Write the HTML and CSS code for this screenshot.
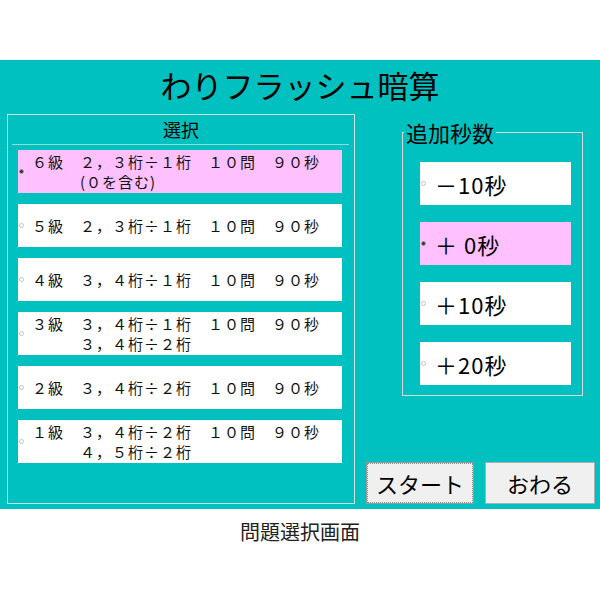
FILE: index.html
```html
<!DOCTYPE html>
<html lang="ja">
<head>
<meta charset="utf-8">
<title>わりフラッシュ暗算</title>
<link rel="stylesheet" href="styles.css">
</head>
<body>
<div class="stage">
  <h1 class="title">わりフラッシュ暗算</h1>
  <section class="levels">
    <div class="levels-head">選択</div>
    <div class="levels-sep"></div>
    <ul class="level-list">
      <li class="opt level sel"><span class="radio"></span><span class="txt">６級　２，３桁÷１桁　１０問　９０秒<br>　　　(０を含む)</span></li>
      <li class="opt level"><span class="radio"></span><span class="txt">５級　２，３桁÷１桁　１０問　９０秒</span></li>
      <li class="opt level"><span class="radio"></span><span class="txt">４級　３，４桁÷１桁　１０問　９０秒</span></li>
      <li class="opt level"><span class="radio"></span><span class="txt">３級　３，４桁÷１桁　１０問　９０秒<br>　　　３，４桁÷２桁</span></li>
      <li class="opt level"><span class="radio"></span><span class="txt">２級　３，４桁÷２桁　１０問　９０秒</span></li>
      <li class="opt level"><span class="radio"></span><span class="txt">１級　３，４桁÷２桁　１０問　９０秒<br>　　　４，５桁÷２桁</span></li>
    </ul>
  </section>
  <fieldset class="extra">
    <legend class="extra-legend">追加秒数</legend>
    <div class="extra-list">
      <div class="opt big"><span class="radio"></span><span class="txt">－10秒</span></div>
      <div class="opt big sel"><span class="radio"></span><span class="txt">＋ 0秒</span></div>
      <div class="opt big"><span class="radio"></span><span class="txt">＋10秒</span></div>
      <div class="opt big"><span class="radio"></span><span class="txt">＋20秒</span></div>
    </div>
  </fieldset>
  <div class="actions">
    <button class="btn start" type="button">スタート</button>
    <button class="btn quit" type="button">おわる</button>
  </div>
</div>
<p class="caption">問題選択画面</p>
</body>
</html>
```
FILE: styles.css
```css
* { box-sizing: border-box; }

body {
  margin: 0;
  width: 600px;
  height: 600px;
  background: #ffffff;
  font-family: "Noto Sans CJK JP", "Noto Sans", sans-serif;
  color: #000;
}

.stage {
  margin-top: 60px;
  height: 449px;
  background: #00c0c0;
  display: grid;
  grid-template-columns: 7px 348px 47px 181px 17px;
  grid-template-rows: 54px 5px 277px 66px 6px 36px 5px;
}

.title {
  grid-column: 1 / -1;
  grid-row: 1;
  margin: 0;
  font-size: 31px;
  font-weight: normal;
  text-align: center;
  line-height: 50px;
}

.levels {
  grid-column: 2;
  grid-row: 2 / 7;
  border: 1px solid #cfe2e2;
  display: flex;
  flex-direction: column;
}

.levels-head {
  height: 29px;
  line-height: 29px;
  text-align: center;
  font-size: 18px;
}

.levels-sep {
  height: 1px;
  background: #8edcdc;
  margin: 0 5px 0 4px;
}

.level-list {
  list-style: none;
  margin: 5px 12px 0 10px;
  padding: 0;
  display: flex;
  flex-direction: column;
  gap: 11px;
}

.opt {
  height: 43px;
  background: #ffffff;
  display: flex;
  align-items: center;
}

.opt.sel { background: #ffc0ff; }

.radio {
  flex: none;
  width: 5px;
  height: 5px;
  border-radius: 50%;
  border: 1px solid #c4c4c4;
  background: #ffffff;
  margin-left: 1px;
}

.sel .radio {
  background: #333;
  border-color: #999;
}

.level .txt {
  margin-left: 8px;
  font-size: 15px;
  letter-spacing: 1px;
  line-height: 20px;
  color: #111;
}

.extra {
  grid-column: 4;
  grid-row: 3;
  margin: 0;
  padding: 0;
  min-width: 0;
  border: 1px solid #d2dada;
}

.extra-legend {
  font-size: 22px;
  line-height: 26px;
  padding: 0 2px;
  margin-left: 1px;
}

.extra-list {
  padding: 17px 11px 10px 17px;
  display: flex;
  flex-direction: column;
  gap: 17px;
}

.big .txt {
  margin-left: 9px;
  font-size: 22px;
  letter-spacing: 1px;
}

.actions {
  grid-column: 3 / -1;
  grid-row: 5 / 7;
  display: flex;
  justify-content: flex-end;
  gap: 11px;
  padding-right: 5px;
}

.btn {
  height: 42px;
  padding: 0;
  background: #f0f0f0;
  border: 1px solid #adadad;
  font-family: inherit;
  font-size: 22px;
  color: #000;
}

.btn.start {
  width: 108px;
  border-color: #9a9a9a;
  outline: 1px dotted #8a8a8a;
  outline-offset: -2px;
}

.btn.quit { width: 110px; }

.caption {
  margin: 0;
  text-align: center;
  font-size: 20px;
  line-height: 46px;
  color: #222;
}
```
